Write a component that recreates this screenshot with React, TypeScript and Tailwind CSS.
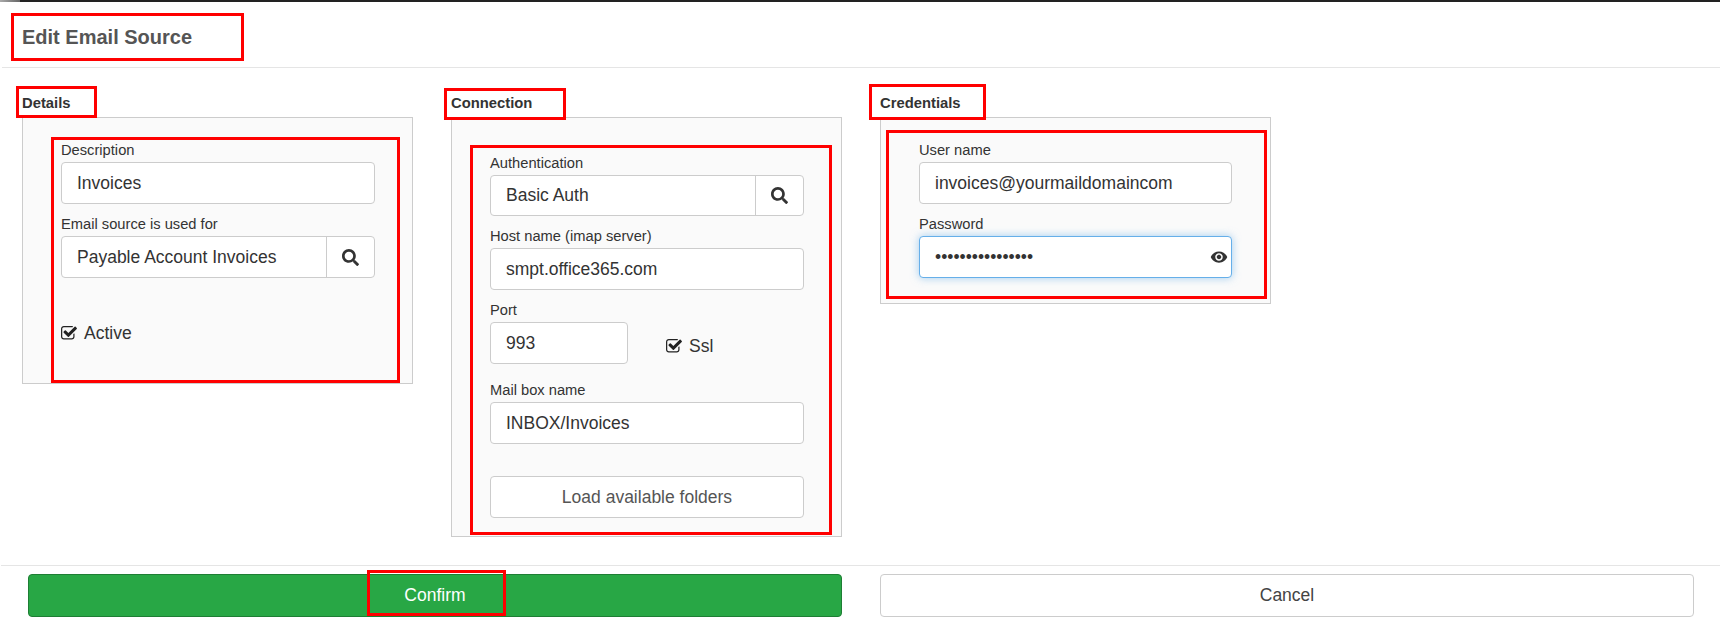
import { FaSearch } from 'react-icons/fa';
import { MdVisibility } from 'react-icons/md';

// red annotation frames sit over the form, placed relative to the page
const Mark = ({ className }: { className: string }) => (
  <div className={`absolute border-[3px] border-[#ff0000] pointer-events-none ${className}`} />
);

const CheckIcon = () => (
  <svg viewBox="64 128 1664 1408" className="w-[16px] h-[13.5px] fill-[#222] shrink-0">
    <path d="M1472 930v318q0 119-84.5 203.5t-203.5 84.5h-832q-119 0-203.5-84.5t-84.5-203.5v-832q0-119 84.5-203.5t203.5-84.5h832q63 0 117 25 15 7 18 23 3 17-9 29l-49 49q-10 10-23 10-3 0-9-2-23-6-45-6h-832q-66 0-113 47t-47 113v832q0 66 47 113t113 47h832q66 0 113-47t47-113v-254q0-13 9-22l64-64q10-10 23-10 6 0 12 3 20 8 20 29zm231-489l-814 814q-24 24-57 24t-57-24l-430-430q-24-24-24-57t24-57l110-110q24-24 57-24t57 24l263 263 647-647q24-24 57-24t57 24l110 110q24 24 24 57t-24 57z" />
  </svg>
);

const Label = ({ text, className = '' }: { text: string; className?: string }) => (
  <label className={`block h-[20px] leading-[20px] text-[14.7px] text-[#333] ${className}`}>{text}</label>
);

const TextInput = ({ value, className = '' }: { value: string; className?: string }) => (
  <input
    readOnly
    defaultValue={value}
    className={`block w-full h-[42px] px-[15px] bg-white border border-[#ccc] rounded text-[17.5px] text-[#333] outline-none ${className}`}
  />
);

const LookupInput = ({ value, className = 'h-[42px]' }: { value: string; className?: string }) => (
  <div className={`flex w-full bg-white border border-[#ccc] rounded ${className}`}>
    <input readOnly defaultValue={value} className="flex-1 min-w-0 px-[15px] bg-transparent text-[17.5px] text-[#333] outline-none" />
    <button type="button" className="w-[48px] flex items-center justify-center border-l border-[#ccc] text-[#333]">
      <FaSearch size={17} />
    </button>
  </div>
);

const CheckRow = ({ text }: { text: string }) => (
  <div className="flex items-center gap-[7px] h-[20px] text-[17.5px] text-[#333]">
    <CheckIcon />
    <span>{text}</span>
  </div>
);

const Section = ({ title, children, className = '' }: { title: string; children: React.ReactNode; className?: string }) => (
  <div className="w-[391px]">
    <h3 className="h-[49px] pt-[25px] leading-[20px] text-[14.8px] font-bold text-[#333]">{title}</h3>
    <div className={`bg-[#fafafa] border border-[#ccc] pl-[38px] ${className}`}>{children}</div>
  </div>
);

export default function App() {
  return (
    <div className="relative w-[1720px] h-[631px] flex flex-col bg-white font-['Liberation_Sans',Arial,sans-serif] overflow-hidden">
      <div className="h-[2px] bg-[#222] shrink-0">
        <div className="w-[20px] h-full bg-gradient-to-r from-[#aaa] to-[#666]" />
      </div>

      <div className="h-[66px] shrink-0 flex items-center pt-[4px] pl-[20px] ml-[2px] border-b border-[#e5e5e5]">
        <h2 className="text-[20px] font-bold text-[#555]">Edit Email Source</h2>
      </div>

      <div className="flex-1 flex gap-[38px] pl-[22px]">
        <Section title="Details" className="pr-[37px] pt-[22px] pb-[40px]">
          <Label text="Description" className="mb-[2px]" />
          <TextInput value="Invoices" />
          <Label text="Email source is used for" className="mt-[10px] mb-[2px]" />
          <LookupInput value="Payable Account Invoices" />
          <div className="mt-[45px]">
            <CheckRow text="Active" />
          </div>
        </Section>

        <Section title="Connection" className="pr-[37px] pt-[35px] pb-[18px]">
          <Label text="Authentication" className="mb-[2px]" />
          <LookupInput value="Basic Auth" className="h-[41px]" />
          <Label text="Host name (imap server)" className="mt-[10px] mb-[2px]" />
          <TextInput value="smpt.office365.com" />
          <div className="flex items-end mt-[10px]">
            <div className="w-[138px]">
              <Label text="Port" className="mb-[2px]" />
              <TextInput value="993" />
            </div>
            <div className="ml-[38px] mb-[8px]">
              <CheckRow text="Ssl" />
            </div>
          </div>
          <Label text="Mail box name" className="mt-[16px] mb-[2px]" />
          <TextInput value="INBOX/Invoices" />
          <button type="button" className="block w-full h-[42px] mt-[32px] bg-white border border-[#ccc] rounded text-[17.5px] text-[#555]">
            Load available folders
          </button>
        </Section>

        <Section title="Credentials" className="pr-[38px] pt-[22px] pb-[25px]">
          <Label text="User name" className="mb-[2px]" />
          <TextInput value="invoices@yourmaildomaincom" />
          <Label text="Password" className="mt-[10px] mb-[2px]" />
          <div className="relative">
            <input
              readOnly
              type="password"
              defaultValue="invoices12345678"
              className="block w-full h-[42px] pl-[15px] pr-[30px] bg-white border border-[#66afe9] rounded text-[17.5px] text-[#333] outline-none shadow-[0_0_8px_rgba(102,175,233,0.6)]"
            />
            <MdVisibility size={18} className="absolute right-[4px] top-[12px] text-[#333]" />
          </div>
        </Section>
      </div>

      <div className="h-[66px] shrink-0 flex gap-[38px] pl-[27px] pt-[8px] ml-[1px] border-t border-[#e5e5e5]">
        <button type="button" className="w-[814px] h-[43px] bg-[#28a745] border border-[#1e7e34] rounded text-[17.5px] text-white">
          Confirm
        </button>
        <button type="button" className="w-[814px] h-[43px] bg-white border border-[#ccc] rounded text-[17.5px] text-[#444]">
          Cancel
        </button>
      </div>

      <Mark className="left-[11px] top-[13px] w-[233px] h-[48px]" />
      <Mark className="left-[16px] top-[86px] w-[81px] h-[32px]" />
      <Mark className="left-[51px] top-[137px] w-[349px] h-[246px]" />
      <Mark className="left-[444px] top-[88px] w-[122px] h-[32px]" />
      <Mark className="left-[470px] top-[145px] w-[362px] h-[390px]" />
      <Mark className="left-[869px] top-[84px] w-[117px] h-[36px]" />
      <Mark className="left-[886px] top-[130px] w-[381px] h-[169px]" />
      <Mark className="left-[367px] top-[570px] w-[139px] h-[46px]" />
    </div>
  );
}
